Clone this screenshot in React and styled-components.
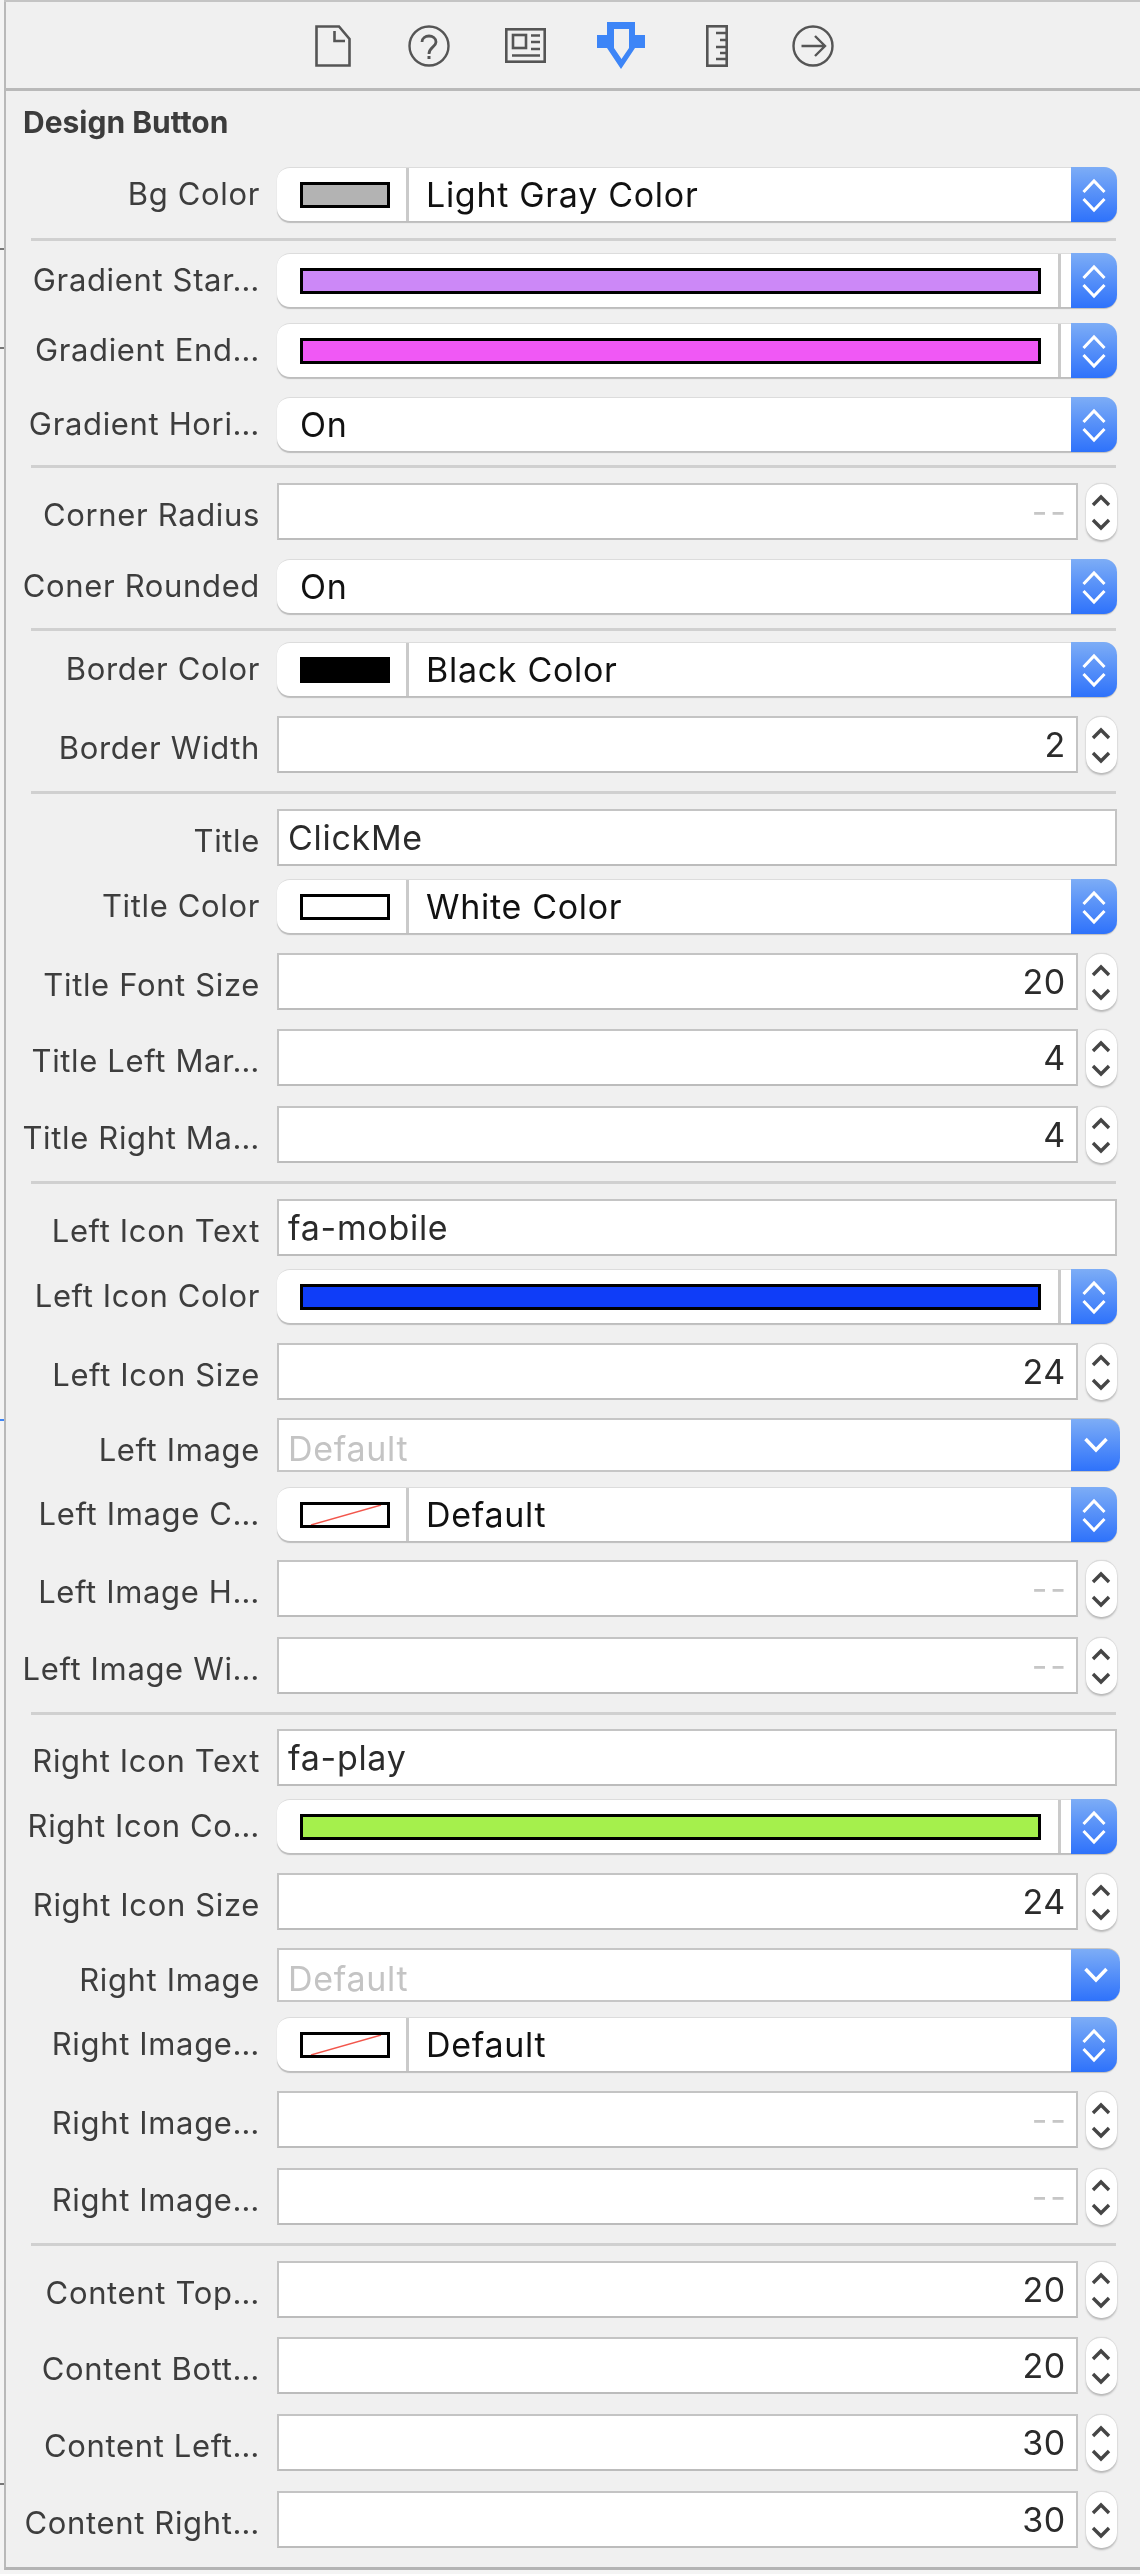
import React from "react";
import styled, { createGlobalStyle } from "styled-components";

const Global = createGlobalStyle`
  html, body {
    margin: 0;
    background: #f4f4f4;
  }
  body {
    font-family: Inter, "Liberation Sans", sans-serif;
  }
`;

const Page = styled.div`
  position: relative;
  width: 1140px;
  height: 2574px;
  overflow: hidden;
  filter: blur(0.45px);
`;

const Panel = styled.div`
  width: 1134px;
  height: 2567px;
  margin-left: 4px;
  background: #f0f0f0;
  border-left: 2px solid #b9b9b9;
  border-right: 2px solid #c2c2c2;
  border-bottom: 3px solid #b4b4b4;
  box-sizing: content-box;
`;

const Tick = styled.div`
  position: absolute;
  left: 0;
  top: ${(p) => p.$top}px;
  width: 4px;
  height: 2px;
  background: ${(p) => p.$color || "#777"};
`;

const Tabs = styled.div`
  height: 91px;
  box-sizing: border-box;
  border-top: 2px solid #c4c4c4;
  border-bottom: 3px solid #b9b9b9;
  margin-left: -2px;
  margin-right: -2px;
  display: flex;
  justify-content: center;
  align-items: center;
  padding-top: 1px;
`;

const Tab = styled.div`
  width: 96px;
  display: flex;
  justify-content: center;
`;

const Heading = styled.div`
  height: 62px;
  padding-left: 17px;
  display: flex;
  align-items: center;
  font-weight: 700;
  font-size: 30px;
  color: #3c3c3c;
`;

const Rule = styled.div`
  height: 3px;
  width: 1085px;
  margin: ${(p) => p.$gap}px 0 0 25px;
  background: #d0d0d0;
`;

const Row = styled.div`
  display: grid;
  grid-template-columns: 254px 840px;
  column-gap: 17px;
  align-items: center;
  margin-top: ${(p) => p.$gap}px;
`;

const Label = styled.div`
  white-space: nowrap;
  font-size: 31px;
  letter-spacing: 0.65px;
  line-height: 36px;
  color: #3d3d3d;
  padding-top: ${(p) => p.$shift || 0}px;
  display: flex;
  justify-content: flex-end;
`;

const Popup = styled.div`
  height: 54px;
  box-sizing: border-box;
  display: flex;
  align-items: stretch;
  background: #fff;
  border-radius: 13px;
  border-top: 1px solid #dcdcdc;
  box-shadow: 0 2px 1px #bdbdbd;
`;

const WellCell = styled.div`
  width: 129px;
  flex: none;
  box-sizing: border-box;
  padding-left: 23px;
  display: flex;
  align-items: center;
`;

const WellRule = styled.div`
  width: 3px;
  flex: none;
  background: #cacaca;
`;

const Swatch = styled.div`
  width: ${(p) => (p.$wide ? "100%" : "90px")};
  height: 26px;
  box-sizing: border-box;
  border: 3px solid #000;
  background: ${(p) => p.$color};
  display: flex;
`;

const WideCell = styled.div`
  flex: 1;
  padding: 0 17px 0 23px;
  display: flex;
  align-items: center;
`;

const Spare = styled.div`
  width: 10px;
  flex: none;
`;

const Value = styled.div`
  flex: 1;
  padding-left: ${(p) => p.$pad}px;
  padding-top: ${(p) => (p.$muted ? 6 : 0)}px;
  display: flex;
  align-items: center;
  font-size: 34px;
  letter-spacing: 0.7px;
  color: ${(p) => (p.$muted ? "#c4c4c4" : "#111")};
`;

const BlueEnd = styled.div`
  width: ${(p) => (p.$wide ? 49 : 46)}px;
  flex: none;
  margin-top: -1px;
  margin-bottom: -1px;
  border-radius: 0 13px 13px 0;
  background: linear-gradient(#7dadf6, #2e72fb);
  display: flex;
  align-items: center;
  justify-content: center;
`;

const DisabledPopup = styled.div`
  height: 54px;
  width: 843px;
  box-sizing: border-box;
  display: flex;
  align-items: stretch;
  background: #fff;
  border: 2px solid #c6c6c6;
  border-right: none;
  border-radius: 0 13px 13px 0;
`;

const StepRow = styled.div`
  display: flex;
  gap: 8px;
  height: 57px;
`;

const Field = styled.div`
  flex: 1;
  box-sizing: border-box;
  background: #fff;
  border: 2px solid #c4c4c4;
  border-bottom-color: #bcbcbc;
  display: flex;
  align-items: center;
  justify-content: ${(p) => (p.$left ? "flex-start" : "flex-end")};
  padding: ${(p) => (p.$left ? "0 0 0 9px" : "0 10px 0 0")};
  font-size: 34px;
  letter-spacing: 0.7px;
  color: #2b2b2b;
`;

const Dashes = styled.span`
  color: #c6c6c6;
  letter-spacing: 3px;
  margin-right: -3px;
`;

const Stepper = styled.div`
  width: 31px;
  flex: none;
  background: #fff;
  border-radius: 15px;
  border-top: 1px solid #dcdcdc;
  box-sizing: border-box;
  box-shadow: 0 2px 2px #b8b8b8, 0 0 1px #c4c4c4;
  display: flex;
`;

const UpDown = ({ color = "#fff" }) => (
  <svg width="46" height="54" viewBox="0 0 46 54" fill="none" stroke={color} strokeWidth="3">
    <path d="M12.5 24 L23 13 L33.5 24" />
    <path d="M12.5 31 L23 42 L33.5 31" />
  </svg>
);

const DownOnly = () => (
  <svg width="46" height="54" viewBox="0 0 46 54" fill="none" stroke="#fff" strokeWidth="3.5">
    <path d="M12.5 21 L23 32 L33.5 21" />
  </svg>
);

const StepIcon = () => (
  <svg width="30" height="57" viewBox="0 0 30 57" fill="none" stroke="#454545" strokeWidth="3.4">
    <path d="M7 21 L15 13 L23 21" />
    <path d="M7 36 L15 44 L23 36" />
  </svg>
);

const NoColor = () => (
  <svg width="84" height="20" viewBox="0 0 84 20" fill="none">
    <path d="M8 20 L78 0" stroke="#f2564c" strokeWidth="1.4" />
  </svg>
);

const DocIcon = () => (
  <svg width="36" height="42" viewBox="0 0 36 42" fill="none" stroke="#555" strokeWidth="2.6">
    <path d="M1.5 1.5 H24 L34.5 14 V40.5 H1.5 Z" />
    <path d="M19.5 6 V16 H30" />
  </svg>
);

const HelpIcon = () => (
  <svg width="42" height="42" viewBox="0 0 42 42" fill="none" stroke="#555" strokeWidth="2.4">
    <circle cx="21" cy="21" r="19.5" />
    <path d="M14 17 C14 9 28 9 28 17 C28 22 21 22 21 29" strokeWidth="2.8" />
    <path d="M21 31 V34" strokeWidth="3" />
  </svg>
);

const NewsIcon = () => (
  <svg width="41" height="35" viewBox="0 0 41 35" fill="none" stroke="#555" strokeWidth="2.6">
    <rect x="1.3" y="1.3" width="38.4" height="32.4" />
    <rect x="8" y="7" width="13" height="13" />
    <path d="M26 7.5 H35 M26 14 H35 M26 21 H35 M7 27.5 H35" />
  </svg>
);

const ShieldIcon = () => (
  <svg width="48" height="48" viewBox="0 0 48 48">
    <path
      fillRule="evenodd"
      fill="#3d85f7"
      d="M10 0 H38 V13 H48 V26 H38 L24 47 L10 26 H0 V13 H10 Z M17 7 V26 L24.5 37 L32 26 V7 Z"
    />
  </svg>
);

const RulerIcon = () => (
  <svg width="22" height="42" viewBox="0 0 22 42" fill="none" stroke="#555" strokeWidth="2.6">
    <rect x="1.3" y="1.3" width="19.4" height="39.4" />
    <path d="M10 8 H20 M14 15 H20 M10 22 H20 M14 28 H20 M10 34 H20" />
  </svg>
);

const ForwardIcon = () => (
  <svg width="42" height="42" viewBox="0 0 42 42" fill="none" stroke="#555" strokeWidth="2.4">
    <circle cx="21" cy="21" r="19.5" />
    <path d="M9.5 21 H33 M23 11 L33 21 L23 31" />
  </svg>
);

const ColorNamed = ({ label, gap, color, name, none }) => (
  <Row $gap={gap}>
    <Label>{label}</Label>
    <Popup>
      <WellCell>
        <Swatch $color={color}>{none && <NoColor />}</Swatch>
      </WellCell>
      <WellRule />
      <Value $pad={17}>{name}</Value>
      <BlueEnd>
        <UpDown />
      </BlueEnd>
    </Popup>
  </Row>
);

const ColorWide = ({ label, gap, color }) => (
  <Row $gap={gap}>
    <Label>{label}</Label>
    <Popup>
      <WideCell>
        <Swatch $wide $color={color} />
      </WideCell>
      <WellRule />
      <Spare />
      <BlueEnd>
        <UpDown />
      </BlueEnd>
    </Popup>
  </Row>
);

const Choice = ({ label, gap, value }) => (
  <Row $gap={gap}>
    <Label>{label}</Label>
    <Popup>
      <Value $pad={23}>{value}</Value>
      <BlueEnd>
        <UpDown />
      </BlueEnd>
    </Popup>
  </Row>
);

const ImageChoice = ({ label, gap }) => (
  <Row $gap={gap}>
    <Label $shift={9}>{label}</Label>
    <DisabledPopup>
      <Value $pad={9} $muted>
        Default
      </Value>
      <BlueEnd $wide>
        <DownOnly />
      </BlueEnd>
    </DisabledPopup>
  </Row>
);

const Numeric = ({ label, gap, value }) => (
  <Row $gap={gap}>
    <Label $shift={6}>{label}</Label>
    <StepRow>
      <Field>{value === undefined ? <Dashes>--</Dashes> : value}</Field>
      <Stepper>
        <StepIcon />
      </Stepper>
    </StepRow>
  </Row>
);

const TextValue = ({ label, gap, value }) => (
  <Row $gap={gap}>
    <Label $shift={6}>{label}</Label>
    <StepRow>
      <Field $left>{value}</Field>
    </StepRow>
  </Row>
);

export default function App() {
  return (
    <Page>
      <Global />
      <Panel>
        <Tabs>
          <Tab>
            <DocIcon />
          </Tab>
          <Tab>
            <HelpIcon />
          </Tab>
          <Tab>
            <NewsIcon />
          </Tab>
          <Tab>
            <ShieldIcon />
          </Tab>
          <Tab>
            <RulerIcon />
          </Tab>
          <Tab>
            <ForwardIcon />
          </Tab>
        </Tabs>
        <Heading>Design Button</Heading>

        <ColorNamed label="Bg Color" gap={14} color="#b3b3b3" name="Light Gray Color" />
        <Rule $gap={17} />
        <ColorWide label="Gradient Star…" gap={12} color="#cc88f7" />
        <ColorWide label="Gradient End…" gap={16} color="#f058f5" />
        <Choice label="Gradient Hori…" gap={20} value="On" />
        <Rule $gap={14} />
        <Numeric label="Corner Radius" gap={15} />
        <Choice label="Coner Rounded" gap={19} value="On" />
        <Rule $gap={15} />
        <ColorNamed label="Border Color" gap={11} color="#000" name="Black Color" />
        <Numeric label="Border Width" gap={20} value="2" />
        <Rule $gap={18} />
        <TextValue label="Title" gap={15} value="ClickMe" />
        <ColorNamed label="Title Color" gap={13} color="#fff" name="White Color" />
        <Numeric label="Title Font Size" gap={20} value="20" />
        <Numeric label="Title Left Mar…" gap={19} value="4" />
        <Numeric label="Title Right Ma…" gap={20} value="4" />
        <Rule $gap={18} />
        <TextValue label="Left Icon Text" gap={15} value="fa-mobile" />
        <ColorWide label="Left Icon Color" gap={13} color="#0f3df8" />
        <Numeric label="Left Icon Size" gap={20} value="24" />
        <ImageChoice label="Left Image" gap={18} />
        <ColorNamed label="Left Image C…" gap={15} color="#fff" name="Default" none />
        <Numeric label="Left Image H…" gap={19} />
        <Numeric label="Left Image Wi…" gap={20} />
        <Rule $gap={18} />
        <TextValue label="Right Icon Text" gap={14} value="fa-play" />
        <ColorWide label="Right Icon Co…" gap={13} color="#a5f04c" />
        <Numeric label="Right Icon Size" gap={20} value="24" />
        <ImageChoice label="Right Image" gap={18} />
        <ColorNamed label="Right Image…" gap={15} color="#fff" name="Default" none />
        <Numeric label="Right Image…" gap={20} />
        <Numeric label="Right Image…" gap={20} />
        <Rule $gap={18} />
        <Numeric label="Content Top…" gap={15} value="20" />
        <Numeric label="Content Bott…" gap={19} value="20" />
        <Numeric label="Content Left…" gap={20} value="30" />
        <Numeric label="Content Right…" gap={20} value="30" />
      </Panel>
      <Tick $top={248} />
      <Tick $top={347} />
      <Tick $top={1419} $color="#3d85f7" />
      <Tick $top={2483} />
    </Page>
  );
}
